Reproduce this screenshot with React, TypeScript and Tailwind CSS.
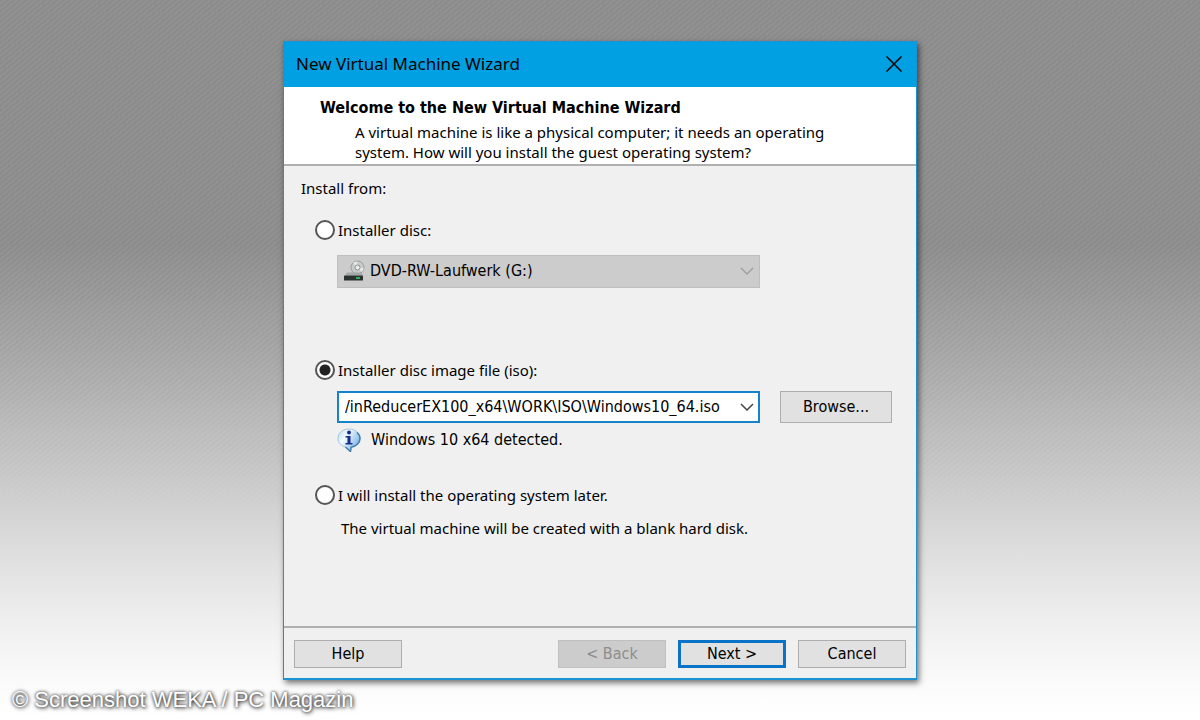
import React, { useState } from 'react';
import clsx from 'clsx';

interface WizardButtonProps {
  children: React.ReactNode;
  primary?: boolean;
  disabled?: boolean;
  size?: string;
}

const WizardButton: React.FC<WizardButtonProps> = ({ children, primary, disabled, size = 'h-7 w-27' }) => (
  <button
    type="button"
    disabled={disabled}
    className={clsx(
      "font-['DejaVu_Sans_Condensed','DejaVu_Sans',sans-serif] text-base leading-5",
      size,
      primary && 'border-3 border-[#0a73c8] bg-[#e1e1e1]',
      disabled && 'border border-[#bfbfbf] bg-[#cccccc] text-[#8d8d8d]',
      !primary && !disabled && 'border border-[#adadad] bg-[#e1e1e1]'
    )}
  >
    {children}
  </button>
);

interface SourceRadioProps {
  id: string;
  label: string;
  checked: boolean;
  onChange: () => void;
}

const SourceRadio: React.FC<SourceRadioProps> = ({ id, label, checked, onChange }) => (
  <div className="flex h-5 items-center gap-[3px]">
    <input
      type="radio"
      id={id}
      name="source"
      checked={checked}
      onChange={onChange}
      className="h-5 w-5 shrink-0 appearance-none rounded-full border-2 border-[#555555] bg-white checked:bg-[radial-gradient(circle,#222222_5px,#ffffff_6px)]"
    />
    <label htmlFor={id}>{label}</label>
  </div>
);

const Chevron: React.FC<{ className?: string }> = ({ className }) => (
  <svg viewBox="0 0 14 8" className={clsx('h-2 w-3.5', className)} fill="none" stroke="currentColor" strokeWidth="1.5">
    <path d="M1 1l6 6 6-6" />
  </svg>
);

const DriveIcon = () => (
  <svg viewBox="0 0 22 22" className="h-5.5 w-5.5">
    <circle cx="14.5" cy="7.5" r="6.5" fill="#c6cccb" stroke="#9aa09e" strokeWidth="1" />
    <path d="M14.5 7.5L10 3A6 6 0 0 1 14 1.500zM14.5 7.5l4.5 4.5a6 6 0 0 0 1.500-4z" fill="#e4e9e8" />
    <circle cx="14.5" cy="7.5" r="2.500" fill="#ececec" stroke="#8b908e" strokeWidth="1" />
    <path d="M4 12.5h14l2 3H2z" fill="#a4a8a6" />
    <rect x="1" y="15.500" width="19" height="5" rx="0.5" fill="#2b3330" />
    <rect x="13" y="17" width="4" height="2" fill="#2fae5a" />
  </svg>
);

const InfoIcon = () => (
  <svg viewBox="0 0 24 24" className="h-6 w-6 shrink-0">
    <defs>
      <linearGradient id="bubble" x1="0" y1="0" x2="1" y2="0.6">
        <stop offset="0" stopColor="#b9dcf4" />
        <stop offset="0.4" stopColor="#f4faff" />
        <stop offset="1" stopColor="#7fb4e4" />
      </linearGradient>
    </defs>
    <path
      d="M12 1C5.500 1 1 5 1 10.500c0 4.300 3 7.300 7.500 8.500L13.500 23.500l.5-4.300c5-.8 9-4.200 9-8.800C23 5 18.500 1 12 1z"
      fill="url(#bubble)"
      stroke="#a5c6de"
      strokeWidth="1"
    />
    <path d="M20 4.500c2 1.700 3 3.700 3 6 0 4.600-4 8-9 8.800l-.5 4.200-5-4.500" fill="none" stroke="#3f7fae" strokeWidth="1.500" />
    <circle cx="12" cy="4.500" r="2" fill="#152f8c" />
    <path d="M8.500 8h5v7h2v1.500h-7V15h2V9.500h-2z" fill="#152f8c" />
  </svg>
);

type Source = 'disc' | 'iso' | 'later';

export default function App() {
  const [source, setSource] = useState<Source>('iso');
  const [isoPath, setIsoPath] = useState('/inReducerEX100_x64\\WORK\\ISO\\Windows10_64.iso');

  return (
    <div className="relative flex min-h-screen items-center justify-center bg-[linear-gradient(#919191_0%,#919191_34%,#a0a0a0_43%,#ababab_50%,#b9b9b9_57%,#c6c6c6_64%,#d7d7d7_73%,#e4e4e4_80%,#f3f3f3_89%,#fcfcfc_96%,#ffffff_100%)] font-['Noto_Sans',sans-serif] text-[15px] text-black">
      <div className="absolute inset-0 bg-[repeating-linear-gradient(140deg,rgba(0,0,0,0.04)_0px,rgba(0,0,0,0.04)_2px,transparent_2px,transparent_4px)] mask-[linear-gradient(black_40%,transparent_75%)]" />

      <main className="relative w-full max-w-[634px] border border-b-2 border-[#1a92d4] bg-[#f0f0f0] shadow-[2px_3px_6px_rgba(0,0,0,0.55)]">
        <header className="flex h-[45px] items-center justify-between bg-[#00a0e3] pr-3.5 pl-3">
          <h1 className="text-[17px]">New Virtual Machine Wizard</h1>
          <button type="button" aria-label="Close">
            <svg viewBox="0 0 16 16" className="h-4 w-4" stroke="currentColor" strokeWidth="1.500">
              <path d="M0.500 0.500l15 15M15.500 0.500l-15 15" />
            </svg>
          </button>
        </header>

        <section className="border-b-2 border-[#b0b0b0] bg-white px-9 pt-[11px] pb-0.5 leading-5">
          <h2 className="font-['DejaVu_Sans_Condensed','DejaVu_Sans',sans-serif] text-base leading-5 font-bold">
            Welcome to the New Virtual Machine Wizard
          </h2>
          <p className="mt-1 pl-[35px]">
            A virtual machine is like a physical computer; it needs an operating
            <br />
            system. How will you install the guest operating system?
          </p>
        </section>

        <form className="leading-5" onSubmit={(e) => e.preventDefault()}>
          <fieldset className="pb-22 pl-[31px]">
            <legend className="-ml-3.5 pt-3">Install from:</legend>

            <div className="mt-[22px]">
              <SourceRadio id="disc" label="Installer disc:" checked={source === 'disc'} onChange={() => setSource('disc')} />
            </div>
            <div className="relative mt-[15px] ml-[22px] h-[33px] max-w-[423px]">
              <select
                aria-label="Drive"
                disabled
                className="h-full w-full appearance-none border border-[#bfbfbf] bg-[#cccccc] pl-8 font-['DejaVu_Sans_Condensed','DejaVu_Sans',sans-serif] text-base text-black opacity-100"
              >
                <option>DVD-RW-Laufwerk (G:)</option>
              </select>
              <div className="pointer-events-none absolute inset-y-0 left-1.5 flex items-center">
                <DriveIcon />
              </div>
              <div className="pointer-events-none absolute inset-y-0 right-1.5 flex items-center">
                <Chevron className="text-[#a0a0a0]" />
              </div>
            </div>

            <div className="mt-18">
              <SourceRadio id="iso" label="Installer disc image file (iso):" checked={source === 'iso'} onChange={() => setSource('iso')} />
            </div>
            <div className="mt-[11px] ml-[22px] flex gap-5">
              <div className="flex h-8 w-[423px] items-center border-2 border-[#1583cb] bg-white">
                <input
                  type="text"
                  aria-label="Image file"
                  value={isoPath}
                  onChange={(e) => setIsoPath(e.target.value)}
                  className="h-full min-w-0 flex-1 pl-1.5 font-['DejaVu_Sans_Condensed','DejaVu_Sans',sans-serif] text-base outline-none"
                />
                <button type="button" aria-label="Recent images" className="px-1">
                  <Chevron className="text-[#444444]" />
                </button>
              </div>
              <WizardButton size="h-8 w-28">Browse...</WizardButton>
            </div>
            <div className="mt-[5px] ml-[22px] flex items-center gap-2.5">
              <InfoIcon />
              <p className="font-['DejaVu_Sans_Condensed','DejaVu_Sans',sans-serif] text-base leading-5">Windows 10 x64 detected.</p>
            </div>

            <div className="mt-[33px]">
              <SourceRadio
                id="later"
                label="I will install the operating system later."
                checked={source === 'later'}
                onChange={() => setSource('later')}
              />
            </div>
            <p className="mt-[13px] ml-[26px]">The virtual machine will be created with a blank hard disk.</p>
          </fieldset>

          <footer className="flex items-center gap-3 border-t-2 border-[#b0b0b0] px-2.5 pt-3 pb-2.5">
            <WizardButton size="mr-auto h-7 w-27">Help</WizardButton>
            <WizardButton disabled>&lt; Back</WizardButton>
            <WizardButton primary>Next &gt;</WizardButton>
            <WizardButton>Cancel</WizardButton>
          </footer>
        </form>
      </main>

      <p className="absolute bottom-1.5 left-3 font-['Liberation_Sans',sans-serif] text-[22px] leading-7 text-white [text-shadow:1px_1px_4px_#222,0_0_3px_#444]">
        © Screenshot WEKA / PC Magazin
      </p>
    </div>
  );
}
